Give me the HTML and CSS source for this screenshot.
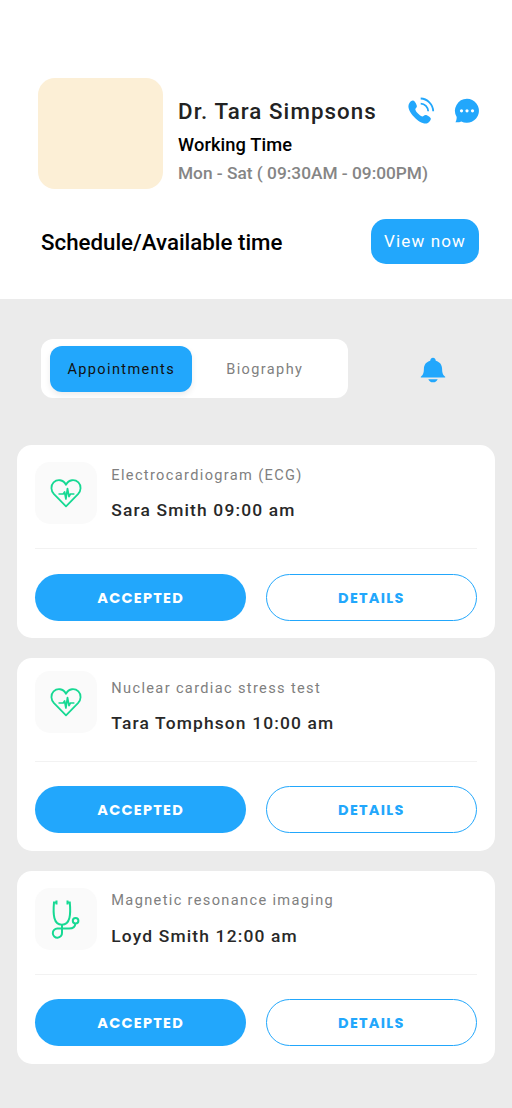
FILE: index.html
```html
<!DOCTYPE html>
<html lang="en">
<head>
<meta charset="utf-8">
<title>Doctor schedule</title>
<link rel="stylesheet" href="styles.css">
</head>
<body>
<svg class="defs" width="0" height="0" aria-hidden="true">
  <symbol id="heart" viewBox="0 0 32 32">
    <path d="M16 29.300 4 17.200C.8 13.800.5 8.500 3.600 5.400 7.200 2 13.200 2.300 16 7.800 18.800 2.300 24.800 2 28.400 5.400c3.100 3.100 2.800 8.400-.4 11.800Z" fill="none" stroke="#16d993" stroke-width="1.800" stroke-linejoin="round"/>
    <path d="M8.500 17h4.700l1.400-2 1.300 7 1.600-10.500 1.500 8.200 1.400-2.700h4" fill="none" stroke="#16d993" stroke-width="1.700" stroke-linejoin="round"/>
  </symbol>
  <symbol id="stethoscope" viewBox="0 0 32 40">
    <g fill="none" stroke="#16d993" stroke-width="2">
      <path d="M7 3.500H4C3.400 10 3.400 15 4.400 19c1 4 4 6.700 7.500 6.700S18.400 23 19.400 19c1-4 1-9 .400-15.500H17"/>
      <path d="M12 25.700v8.100a4.600 4.600 0 1 1-4.600-4.300h11.600c3.800 0 6.300-1.600 6.300-5"/>
      <circle cx="25.600" cy="21.800" r="2.800"/>
    </g>
    <path d="M5.500 1.500h2v4h-2zM16.500 1.500h2v4h-2z" fill="#16d993"/>
  </symbol>
</svg>

<header class="profile">
  <div class="doctor">
    <div class="avatar"></div>
    <div class="info">
      <div class="name-row">
        <h1 class="name">Dr. Tara Simpsons</h1>
        <svg class="phone" viewBox="0 0 28 28" width="28" height="28">
          <path d="M2.300 6.200C3.500 4.300 5 3.200 6.600 3.700 8.200 4.200 9.900 8 9.900 9.300c0 1.500-1.800 2-1.600 3.300.3 2 4.700 6.600 6.800 6.900 1.400.2 1.900-1.600 3.400-1.600 1.400 0 5.100 2.200 5.300 3.700.2 2-2.200 4.500-4.200 4.900C12.700 27.700.300 15 1.500 8.500c.1-.8.400-1.600.8-2.300Z" fill="#22a7fc"/>
          <path d="M13.700 1.500c6.500.1 12.300 6 12.500 12.700M13.700 6.600c4.100.1 7.300 3.500 7.500 7.700" fill="none" stroke="#22a7fc" stroke-width="1.800"/>
        </svg>
        <svg class="chat" viewBox="0 0 26 26" width="26" height="26">
          <path d="M13 .8a12 12 0 1 1-5.700 22.600c-1.600.8-3.500 1-5.900.8C2.300 23 2.600 21.600 2.700 19A12 12 0 0 1 13 .8Z" fill="#22a7fc"/>
          <g fill="#fff"><circle cx="7.500" cy="12.800" r="1.600"/><circle cx="13" cy="12.800" r="1.600"/><circle cx="18.500" cy="12.800" r="1.600"/></g>
        </svg>
      </div>
      <p class="label">Working Time</p>
      <p class="hours">Mon - Sat ( 09:30AM - 09:00PM)</p>
    </div>
  </div>
  <div class="schedule">
    <h2 class="schedule-title">Schedule/Available time</h2>
    <button class="view">View now</button>
  </div>
</header>

<main class="content">
  <nav class="toolbar">
    <div class="tabs">
      <button class="tab active">Appointments</button>
      <button class="tab">Biography</button>
    </div>
    <svg class="bell" viewBox="0 0 26 26" width="26" height="26">
      <path d="M.800 20.500v-.8c2.500-2.200 3-3.700 3.100-8C4 7.600 6.300 4.800 10.200 3.700 10.400 2 11.500.7 13 .7s2.600 1.300 2.800 3c3.900 1.100 6.200 3.900 6.300 8 .1 4.300.6 5.800 3.100 8v.8Z" fill="#22a7fc"/>
      <path d="M8.300 22.200h9.400c-.8 2-2.300 3.100-4.700 3.100s-3.900-1.100-4.700-3.100Z" fill="#22a7fc"/>
    </svg>
  </nav>

  <article class="card">
    <div class="summary">
      <div class="tile"><svg class="heart"><use href="#heart"/></svg></div>
      <div class="text"><p class="test">Electrocardiogram (ECG)</p><p class="patient">Sara Smith 09:00 am</p></div>
    </div>
    <div class="actions"><button class="btn accepted">ACCEPTED</button><button class="btn details">DETAILS</button></div>
  </article>
  <article class="card">
    <div class="summary">
      <div class="tile raised"><svg class="heart"><use href="#heart"/></svg></div>
      <div class="text"><p class="test">Nuclear cardiac stress test</p><p class="patient">Tara Tomphson 10:00 am</p></div>
    </div>
    <div class="actions"><button class="btn accepted">ACCEPTED</button><button class="btn details">DETAILS</button></div>
  </article>
  <article class="card">
    <div class="summary">
      <div class="tile"><svg class="steth"><use href="#stethoscope"/></svg></div>
      <div class="text"><p class="test">Magnetic resonance imaging</p><p class="patient">Loyd Smith 12:00 am</p></div>
    </div>
    <div class="actions"><button class="btn accepted">ACCEPTED</button><button class="btn details">DETAILS</button></div>
  </article>
</main>
</body>
</html>
```
FILE: styles.css
```css
* { box-sizing: border-box; margin: 0; }
body { min-height: 1108px; background: #ebebeb; font-family: Roboto, "Liberation Sans", sans-serif; }
h1, h2 { font-weight: 500; }
p, h1, h2, button { white-space: nowrap; }
button { border: 0; padding: 0; background: none; font-family: inherit; }
svg { display: block; flex: none; }
.defs { position: absolute; }

.profile { height: 299px; padding: 78px 33px 0 38px; background: #fff; }
.doctor { display: flex; gap: 15px; }
.avatar { flex: none; width: 125px; height: 111px; border-radius: 17px; background: #fcefd6; }
.info { flex: 1; padding-top: 18px; }
.name-row { display: flex; align-items: center; height: 30px; }
.name { width: 229px; font-size: 22.300px; line-height: 30px; letter-spacing: 1.080px; color: #222; }
.chat { margin-left: 19px; }
.label { margin-top: 8px; font-size: 18.300px; line-height: 22px; font-weight: 500; letter-spacing: .1px; color: #000; }
.hours { margin-top: 6px; font-size: 17.300px; line-height: 22px; font-weight: 500; color: #858585; }
.schedule { display: flex; align-items: center; justify-content: space-between; margin: 30px 0 0 3px; }
.schedule-title { padding-top: 1px; font-size: 22.300px; line-height: 30px; color: #000; }
.view { width: 108px; height: 44.500px; border-radius: 15px; background: #22a7fc; color: #fff; font-size: 17px; letter-spacing: 1.150px; }

.content { padding: 39.500px 17.400px 0; }
.toolbar { display: flex; align-items: center; margin: 0 0 47px 23.300px; }
.tabs { display: flex; align-items: center; width: 307px; height: 59.500px; padding: 2px 9.600px 0; border-radius: 12px; background: #fff; }
.tab { width: 142px; height: 46px; padding-top: 1px; border-radius: 12px; font-size: 14.500px; letter-spacing: 1.400px; color: #808080; }
.tab + .tab { padding-left: 3px; }
.tab.active { background: #22a7fc; color: #111; box-shadow: 0 3px 6px rgba(0, 0, 0, .08); }
.bell { margin: 3px 0 0 72px; }

.card { height: 193px; margin-bottom: 19.750px; padding: 0 17.500px; border-radius: 15px; background: #fff; }
.summary { display: flex; gap: 14.400px; height: 104px; padding-top: 17px; border-bottom: 1px solid #f2f2f2; }
.tile { display: flex; align-items: center; justify-content: center; width: 62px; height: 62px; border-radius: 15px; background: #fafafa; }
.tile.raised { margin-top: -4px; }
.heart { width: 32px; height: 32px; }
.steth { width: 32px; height: 40px; }
.text { padding-top: 2.900px; }
.test { font-size: 14.600px; line-height: 20px; letter-spacing: 1.340px; color: #808080; }
.patient { margin-top: 13.500px; font-size: 17.400px; line-height: 24px; font-weight: 500; letter-spacing: 1.160px; color: #282828; }
.actions { display: flex; justify-content: space-between; padding-top: 24.500px; }
.btn { width: 211.500px; height: 47px; padding-top: 2px; border-radius: 24px; font: 700 14.500px Poppins, Lato, sans-serif; letter-spacing: 1.250px; }
.accepted { background: #22a7fc; color: #fff; }
.details { border: 1.400px solid #22a7fc; color: #22a7fc; }
```
